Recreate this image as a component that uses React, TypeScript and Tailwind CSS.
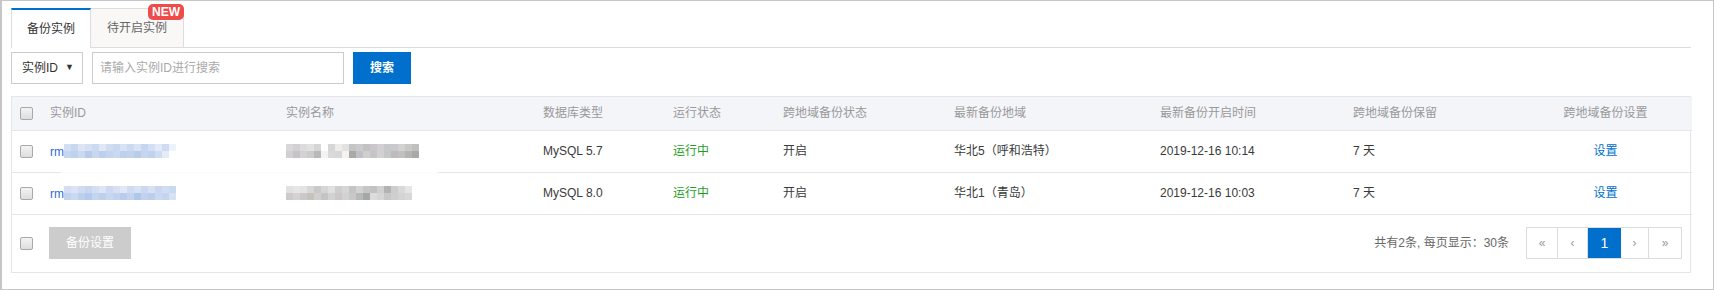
import React from 'react';

const font = { fontFamily: '"Liberation Sans", "Noto Sans CJK SC", sans-serif' };

const blueTiles = [
  ['#d2def2', '#c8d8f0', '#dde5f5', '#d6e0f3', '#cbd9f1', '#e0e8f6', '#d0dcf2', '#c9d7f0', '#d8e2f4', '#ccd9f1', '#dae3f5', '#c6d6f0', '#d4dff3', '#e3eaf7', '#cfdbf2', '#eef2fa'],
  ['#c6d6ef', '#bfd1ed', '#cad8f0', '#b8cbea', '#c8d7f0', '#bccfec', '#c4d4ef', '#cad9f1', '#bdd0ec', '#c3d3ee', '#b9cdeb', '#c7d6ef', '#c0d2ed', '#d0dcf2', '#e6ecf7', '#ffffff'],
];
const blueTiles2 = [
  ['#d5dff3', '#dbe3f4', '#d0dcf2', '#c8d6f0', '#d3def3', '#dce5f5', '#ccd9f1', '#d6e0f3', '#e0e8f6', '#cfdbf2', '#d9e2f4', '#cbd8f1', '#d7e1f3', '#c9d7f0', '#d1ddf2', '#c8daf2'],
  ['#c2d3ee', '#cad8f0', '#bccfec', '#b5c9ea', '#c6d5ef', '#bed0ec', '#c8d7f0', '#c1d2ed', '#b8cdeb', '#c4d4ee', '#aec8ea', '#c2d2ee', '#bbcfec', '#cad8f0', '#c3d5ef', '#d6e2f4'],
];
const grayTiles = [
  ['#d9d7d9', '#d2d0d2', '#dcdcdc', '#e1e1e3', '#d5d5d5', '#ffffff', '#d6d6d6', '#eeebe9', '#e2e2e2', '#c5c5c5', '#cbcbcb', '#c2c2c2', '#cac7ca', '#d2cfd2', '#c6c8c9', '#cbc8cb', '#d4d1d3', '#c8c8c8', '#c0c0c0'],
  ['#d1cfd1', '#c6c3c6', '#d2d2d2', '#cccccc', '#b9b9b9', '#f3f3f3', '#dadada', '#d8d8d8', '#f7f2ee', '#a9a9a9', '#c0c0c6', '#cfcfcf', '#c5c5c5', '#d2d2d2', '#c7c7c7', '#bcbcbc', '#c1c1c1', '#b5b5b1', '#a9a9a9'],
];
const grayTiles2 = [
  ['#e2e0e2', '#e6e6e6', '#e3e3e3', '#d6d6d6', '#c9c9c9', '#d5d5d5', '#e0e0e0', '#d0ccd0', '#d6d6d6', '#c4c4c4', '#d2d2d2', '#c6c6c6', '#c2c2c2', '#d0d0d0', '#b6b1b6', '#cdcdcd', '#d9d9d9', '#e6e6e6'],
  ['#cccacc', '#d6d2d2', '#c9c9c9', '#c8c2bc', '#cfcfcf', '#c4c4c4', '#d2d2d2', '#cbc7cb', '#d2d2d2', '#c8c8c8', '#b8b8b8', '#a3a8ab', '#dedbde', '#d6d6d6', '#c8c8c8', '#cfcfcf', '#d4d4d4', '#d8d8d8'],
];

function Mosaic({ tiles }: { tiles: string[][] }) {
  return (
    <div className="flex flex-col">
      {tiles.map((row, i) => (
        <div key={i} className="flex">
          {row.map((c, j) => (
            <div key={j} className="w-[7px] h-[7px]" style={{ backgroundColor: c }} />
          ))}
        </div>
      ))}
    </div>
  );
}

function Checkbox() {
  return (
    <div className="w-[13px] h-[13px] rounded-[2px] border border-[#a9a9a9] bg-gradient-to-b from-[#f3f3f3] to-[#dedede]" />
  );
}

const headers = [
  '实例ID',
  '实例名称',
  '数据库类型',
  '运行状态',
  '跨地域备份状态',
  '最新备份地域',
  '最新备份开启时间',
  '跨地域备份保留',
];

const rows = [
  { id: blueTiles, name: grayTiles, db: 'MySQL 5.7', region: '华北5（呼和浩特）', time: '2019-12-16 10:14' },
  { id: blueTiles2, name: grayTiles2, db: 'MySQL 8.0', region: '华北1（青岛）', time: '2019-12-16 10:03' },
];

const widths = [28, 236, 257, 130, 110, 171, 206, 193, 175, 174];

export default function App() {
  return (
    <div
      className="w-[1714px] h-[290px] border border-[#c6c6c6] border-l-2 bg-white pl-[9px] pt-[7px] text-[12px] text-[#3a3a3a]"
      style={font}
    >
      <div className="w-[1680px]">
        {/* Tabs */}
        <div className="flex h-[40px] border-b border-[#dddddd]">
          <div className="w-[80px] h-[40px] border-t-2 border-[#0070cc] border-l border-r border-l-[#dddddd] border-r-[#dddddd] bg-white flex items-center justify-center text-[12px] text-[#333] -mb-px">
            备份实例
          </div>
          <div className="relative w-[93px] h-[39px] border-t border-r border-[#dddddd] bg-[#f9f8f7] flex items-center justify-center text-[12px] text-[#666]">
            待开启实例
            <span className="absolute right-[-1px] top-[-5px] h-[16px] px-[4px] rounded-[5px] bg-[#ee4b4b] text-white text-[12px] font-bold leading-[16px]">
              NEW
            </span>
          </div>
        </div>

        {/* Search */}
        <div className="flex mt-[4px] h-[32px]">
          <div className="w-[72px] h-[32px] border border-[#cccccc] flex items-center justify-between pl-[10px] pr-[8px] text-[#333]">
            <span>实例ID</span>
            <span className="text-[9px] text-[#333]">▼</span>
          </div>
          <div className="ml-[9px] w-[252px] h-[32px] border border-[#cccccc] flex items-center pl-[7px] text-[#aaaaaa]">
            请输入实例ID进行搜索
          </div>
          <div className="ml-[9px] w-[58px] h-[32px] bg-[#0070cc] text-white flex items-center justify-center font-bold">
            搜索
          </div>
        </div>

        {/* Table */}
        <div className="relative mt-[12px] border border-[#e3e6eb]">
          <table className="table-fixed border-collapse w-full">
            <colgroup>
              {widths.map((w, i) => (
                <col key={i} style={{ width: w }} />
              ))}
            </colgroup>
            <thead>
              <tr className="h-[33px] bg-[#f4f5f9] border-b border-[#e3e6eb] text-[#999]">
                <th className="pl-[8px] font-normal text-left">
                  <Checkbox />
                </th>
                {headers.map((h) => (
                  <th key={h} className="pl-[10px] font-normal text-left">
                    {h}
                  </th>
                ))}
                <th className="font-normal text-center pl-[1px]">跨地域备份设置</th>
              </tr>
            </thead>
            <tbody>
              {rows.map((r, i) => (
                <tr key={i} className="h-[42px] border-b border-[#e3e6eb]">
                  <td className="pl-[8px]">
                    <Checkbox />
                  </td>
                  <td className="pl-[10px]">
                    <div className="flex items-center">
                      <span className="text-[#2f6bd6] mt-[1px]">rm</span>
                      <Mosaic tiles={r.id} />
                    </div>
                  </td>
                  <td className="pl-[10px]">
                    <Mosaic tiles={r.name} />
                  </td>
                  <td className="pl-[10px]">{r.db}</td>
                  <td className="pl-[10px] text-[#1e9e1e]">运行中</td>
                  <td className="pl-[10px]">开启</td>
                  <td className="pl-[10px]">{r.region}</td>
                  <td className="pl-[10px]">{r.time}</td>
                  <td className="pl-[10px]">7 天</td>
                  <td className="text-center text-[#0070cc] pl-[1px]">设置</td>
                </tr>
              ))}
            </tbody>
          </table>
          <div className="absolute left-[49px] top-[75px] w-[377px] h-[2px] bg-[#fbfcfd]" />

          {/* Footer */}
          <div className="h-[57px] flex items-center justify-between pl-[8px] pr-[8px]">
            <div className="flex items-center">
              <Checkbox />
              <div className="ml-[16px] w-[82px] h-[32px] bg-[#cccccc] text-white flex items-center justify-center">
                备份设置
              </div>
            </div>
            <div className="flex items-center">
              <span className="text-[#666]">共有2条, 每页显示：30条</span>
              <div className="ml-[17px] flex h-[32px] border border-[#dddddd]">
                <div className="w-[31px] flex items-center justify-center text-[#999] border-r border-[#dddddd]">«</div>
                <div className="w-[30px] flex items-center justify-center text-[#999] border-r border-[#dddddd]">‹</div>
                <div className="w-[33px] flex items-center justify-center bg-[#0070cc] text-white text-[14px]">1</div>
                <div className="w-[28px] flex items-center justify-center text-[#999] border-r border-[#dddddd]">›</div>
                <div className="w-[32px] flex items-center justify-center text-[#999]">»</div>
              </div>
            </div>
          </div>
        </div>
      </div>
    </div>
  );
}
